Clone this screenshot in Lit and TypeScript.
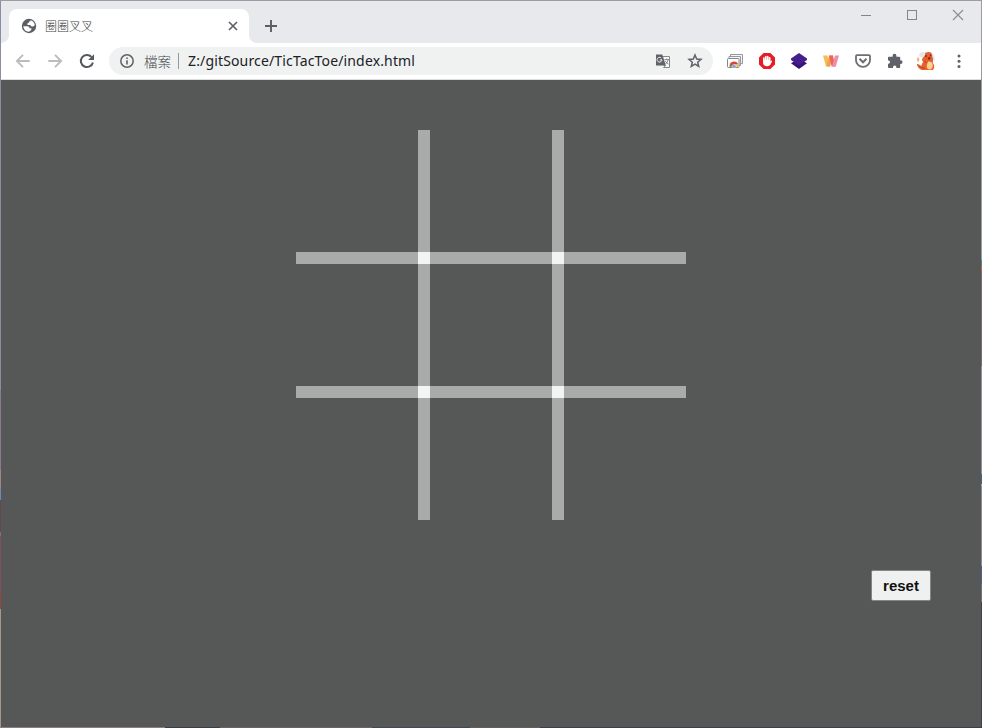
import { LitElement, html, css, svg } from "lit";
import { customElement, property } from "lit/decorators.js";

const icons: Record<string, unknown> = {
  globe: svg`<circle cx="10" cy="10" r="7.2" fill="#5b5e63"/><path d="M4.2 10.2 H8.4 Q10.6 10.4 10.6 12.2 H12.4 V13.6 Q11.6 15.6 9.6 15.8 Q5 15.2 4.2 10.2 Z M11.4 4.3 Q14.8 5.2 15.8 8.8 Q15.6 10.8 13.4 10.6 Q11.6 10.4 11.4 8.9 H8.4 V7.2 Q10.2 7.3 10 5.6 H11.4 Z" fill="#fff"/>`,
  close: svg`<path d="M6 6 L14 14 M14 6 L6 14" stroke="#5f6368" stroke-width="1.7"/>`,
  plus: svg`<path d="M10 4 V16 M4 10 H16" stroke="#5b5e63" stroke-width="1.9"/>`,
  back: svg`<path d="M16.7 10 H4.5 M10 3.8 L3.9 10 L10 16.2" stroke="#babcbe" stroke-width="1.9" fill="none"/>`,
  forward: svg`<path d="M3.3 10 H15.5 M10 3.8 L16.1 10 L10 16.2" stroke="#babcbe" stroke-width="1.9" fill="none"/>`,
  reload: svg`<path d="M15.9 11.4 A6.1 6.1 0 1 1 14.5 5.9" fill="none" stroke="#55585d" stroke-width="2"/><path d="M17 3.2 V9 H11.2 Z" fill="#55585d"/>`,
  info: svg`<circle cx="10" cy="10" r="6.2" fill="none" stroke="#5f6368" stroke-width="1.5"/><path d="M9.2 9.2 h1.6 v4.2 h-1.6z M9.2 6.4 h1.6 v1.6 h-1.6z" fill="#5f6368"/>`,
  translate: svg`<path d="M9 5.5 H16.5 V16.5 H10.5" fill="#f8f9f9" stroke="#85888b"/><path d="M3 3.5 H9.3 L12.8 14.4 H3 Z" fill="#5f6368"/><path d="M9 8.9 H6.8 M8.9 8.9 A2.4 2.4 0 1 1 8.2 7" stroke="#f1f3f4" fill="none"/><path d="M11.4 8.6 H16 M13.7 7.6 V8.6 M15.2 8.8 Q14.5 11.5 12.4 13 M12.2 10 Q13.5 12 15.5 13.2 M10.6 14.5 L12.6 14.5 L10.6 16.5" stroke="#6b6e72" stroke-width=".8" fill="none"/>`,
  star: svg`<path d="M10 4 L11.7 8 L16 8.4 L12.7 11.2 L13.7 15.5 L10 13.2 L6.3 15.5 L7.3 11.2 L4 8.4 L8.3 8 Z" fill="none" stroke="#5f6368" stroke-width="1.5"/>`,
  cast: svg`<path d="M5.5 6.5 V3.5 H17.5 V12.5 H15.5" fill="#f5f5f5" stroke="#96999b"/><path d="M4 8 V5.5 H15.5 V14.5 H14" fill="#f5f5f5" stroke="#96999b"/><rect x="2.5" y="7.5" width="11.5" height="9" rx=".8" fill="#fff" stroke="#85888b"/><path d="M4.8 16 Q4 11 9 10.6 Q12.2 10.6 13.2 13.4 H9 L7.2 16 Z" fill="#dc4437"/><path d="M4.8 16 Q4.5 14.6 5 13.4 L7.6 16 Z" fill="#3ba55b"/><path d="M10.8 13.4 H13.2 V16 H10.5 Z" fill="#f4c33d"/><path d="M6.8 16 A2.3 2.3 0 0 1 11.4 16 Z" fill="#4f83d8" stroke="#fff" stroke-width=".6"/>`,
  hand: svg`<path d="M6.6 2 H13.4 L18 6.6 V13.4 L13.4 18 H6.6 L2 13.4 V6.6 Z" fill="#e31e24"/><path d="M6 10.5 V6.7 Q6.8 5.7 7.5 6.7 V9 H7.8 V5.4 Q8.8 4.4 9.5 5.4 V8.8 H9.8 V5.2 Q10.8 4.4 11.5 5.3 V9 H11.8 V6.3 Q12.8 5.4 13.5 6.5 V10.6 L14.2 9.5 Q15.2 9.4 15.1 10.2 L13.3 13.8 Q12.5 15.2 10.2 15.2 Q6 15.2 6 11.5 Z" fill="#fff"/>`,
  layers: svg`<path d="M10 7.5 L18 12.2 L10 18 L2 12.2 Z" fill="#371477"/><path d="M10 2 L18 7.4 V9 L10 14.3 L2 9 V7.4 Z" fill="#45208c"/>`,
  w: svg`<path d="M2 4.4 H6.4 L9.2 15.6 H5 Z" fill="#f4bd58"/><path d="M8 4.4 H12 L9.2 15.6 H5.6 Z" fill="#f0a04f"/><path d="M8 4.4 H12 L14.4 15.6 H10.6 Z" fill="#ec665c"/><path d="M14 4.4 H18 L14.8 15.6 H11 Z" fill="#ee8da8"/>`,
  pocket: svg`<path d="M4 4.2 H16 Q17 4.2 17 5.2 V9.2 A7 6.7 0 0 1 3 9.2 V5.2 Q3 4.2 4 4.2 Z" fill="none" stroke="#6b6e72" stroke-width="1.8"/><path d="M6.5 7.8 L10 11.3 L13.5 7.8" fill="none" stroke="#6b6e72" stroke-width="2"/>`,
  puzzle: svg`<path d="M3.6 5.7 H7.6 V4.7 A1.9 1.9 0 0 1 11.4 4.7 V5.7 H14.3 Q15.2 5.7 15.2 6.6 V9.2 H15.7 A1.8 1.8 0 0 1 15.7 12.9 H15.2 V16 Q15.2 16.9 14.3 16.9 H11.4 V16.3 A1.7 1.7 0 0 0 8 16.3 V16.9 H4 Q3 16.9 3 16 V12.7 H3.7 A1.7 1.7 0 0 0 3.7 9.4 H3 V6.5 Z" fill="#5f6368"/>`,
  menu: svg`<circle cx="10" cy="5" r="1.5" fill="#5f6368"/><circle cx="10" cy="10.2" r="1.5" fill="#5f6368"/><circle cx="10" cy="15.4" r="1.5" fill="#5f6368"/>`,
  avatar: svg`<path d="M7 6 L8 2.4 Q10.5 .2 14.5 1.2 L17 4 Q18.6 7 17 9.6 L16.8 12 Q18.6 13.5 18.2 16.5 L17 19 H5.6 Q1 16.5 .8 12.8 L3 13.6 Q4 15 5.6 14.6 L7 10.5 L5.8 9 Z" fill="#e8602f"/><path d="M7.5 6.2 Q5 7 3.2 5.4 Q2.4 3 4.6 1.4 Q7.6 .2 9.2 1.8 Q10 4.4 7.5 6.2 Z M15.4 2.8 L18.4 4.4 L19 9 L17.2 8.4 Z" fill="#e4e7e8"/><path d="M12 10.6 Q16.4 10.4 16.8 14 Q16.8 18.4 13.4 18.6 Q10.4 17.6 10.8 14.4 Z" fill="#f8d48e"/><path d="M11.6 6.8 L14.2 5.6 L14.6 8 L12.4 9 Z" fill="#8c2f20"/><path d="M10 4 v2 M14.8 3.5 v1.8" stroke="#432524" stroke-width="1.1"/><path d="M2 5.4 L3.4 8.2 L2.4 11.4 L.8 8.8 Z" fill="#f6b06c"/><path d="M3.2 15.2 Q5.6 17.4 8.6 17.2 M9 10 L10.4 12" stroke="#b24425" fill="none"/>`,
  minimize: svg`<path d="M5 10.5 H15" stroke="#858391"/>`,
  maximize: svg`<rect x="5.5" y="5.5" width="9" height="9" fill="none" stroke="#858391"/>`,
  exit: svg`<path d="M5 5 L15 15 M15 5 L5 15" stroke="#8a8a92" stroke-width="1.1"/>`,
};

@customElement("ui-icon")
class UiIcon extends LitElement {
  @property() name = "";
  static styles = css`
    :host { display: block; width: 20px; height: 20px; flex: none; }
    svg { display: block; }
  `;
  render() {
    return html`<svg width="20" height="20" viewBox="0 0 20 20">${icons[this.name]}</svg>`;
  }
}

@customElement("game-board")
class GameBoard extends LitElement {
  static styles = css`
    :host {
      display: grid;
      grid-template: 122px 12px 122px 12px 122px / 122px 12px 122px 12px 122px;
    }
    .bar { background: #a9abaa; }
    .cross { background: #f4f4f4; }
  `;
  render() {
    return Array.from({ length: 25 }, (_, i) => {
      const odd = (Math.floor(i / 5) % 2) + ((i % 5) % 2);
      return html`<div class=${["cell", "bar", "cross"][odd]}></div>`;
    });
  }
}

@customElement("app-root")
class AppRoot extends LitElement {
  static styles = css`
    :host {
      display: flex;
      width: 982px;
      height: 728px;
      box-sizing: border-box;
      padding: 1px;
      font-family: "Noto Sans", "Noto Sans CJK TC", sans-serif;
      background:
        linear-gradient(#9c9aa3, #9c9aa3) top / 100% 1px no-repeat,
        linear-gradient(90deg, #8b7f86 0 165px, #3c3d47 165px 220px, #6b6265 220px 372px, #444653 372px 470px, #625d60 470px 540px, #3d3e49 540px) bottom / 100% 1px no-repeat,
        linear-gradient(#8b8ca8 0 390px, #8d7a90 390px 470px, #a08884 470px 489px, #6b89bb 489px 500px, #64474f 500px 532px, #777 532px 536px, #81505f 536px 590px, #914641 590px 609px, #a6978d 609px) left / 1px 100% no-repeat,
        linear-gradient(#9b9aa5 0 260px, #5e7f91 260px 266px, #c56b32 266px 271px, #81686b 271px 366px, #9691a0 366px 474px, #45638b 474px 484px, #aaa 484px 486px, #918b94 486px 566px, #555e83 566px 584px, #77727a 584px 602px, #41424d 602px) right / 1px 100% no-repeat;
    }
    .window { flex: 1; display: flex; flex-direction: column; min-width: 0; }
    .strip { height: 42px; display: flex; background: #e8e9ed; }
    .foot { width: 8px; height: 8px; align-self: flex-end; }
    .foot.left { background: radial-gradient(circle at 0 0, transparent 7.6px, #fff 8.2px); }
    .foot.right { background: radial-gradient(circle at 100% 0, transparent 7.6px, #fff 8.2px); }
    .tab {
      width: 240px; height: 34px; margin-top: 8px; box-sizing: border-box;
      padding: 0 6px 0 10px; display: flex; align-items: center;
      background: #fff; border-radius: 8px 8px 0 0;
    }
    .title {
      flex: 1; margin-left: 6px; font: 300 12px/16px "Noto Sans CJK TC", sans-serif; color: #3c4043;
    }
    .add { margin: 15px 0 0 4px; }
    .controls { margin: 4px 13px 0 auto; display: flex; gap: 26px; }
    .toolbar {
      height: 37px; box-sizing: border-box; display: flex; align-items: center;
      padding: 0 12px; background: #fff; border-bottom: 1px solid #dcdddf;
    }
    .nav { display: flex; gap: 12px; }
    .address {
      width: 604px; height: 28px; box-sizing: border-box; margin-left: 12px; padding: 0 8px;
      display: flex; align-items: center; border-radius: 14px; background: #f0f2f2;
    }
    .scheme { margin-left: 7px; width: 27px; font: 300 13.5px/20px "Noto Sans CJK TC", sans-serif; color: #3f4247; }
    .rule { width: 1px; height: 16px; margin: 0 9px 0 7px; background: #96989b; }
    .url { flex: 1; font-size: 14px; line-height: 20px; letter-spacing: 0.15px; color: #202124; }
    .actions { display: flex; gap: 12px; }
    .extensions { display: flex; gap: 12px; margin-left: 12px; }
    .avatar { margin-left: 11px; }
    .menu { margin-left: 13px; }
    .page {
      flex: 1; display: flex; flex-direction: column; align-items: center;
      background: #565857; padding-top: 50px;
    }
    .reset {
      align-self: flex-end; margin: 50px 50px 0 0; width: 60px; height: 31px; box-sizing: border-box;
      border: 1px solid #858786; border-radius: 2px; padding: 0; background: #eff0f0; color: #111;
      font: bold 15px "Liberation Sans", Arial, sans-serif;
    }
  `;
  render() {
    const icon = (name: string) => html`<ui-icon name=${name}></ui-icon>`;
    return html`
      <div class="window">
        <div class="strip">
          <div class="foot left"></div>
          <div class="tab">${icon("globe")}<span class="title">圈圈叉叉</span>${icon("close")}</div>
          <div class="foot right"></div>
          <ui-icon class="add" name="plus"></ui-icon>
          <div class="controls">${["minimize", "maximize", "exit"].map(icon)}</div>
        </div>
        <div class="toolbar">
          <div class="nav">${["back", "forward", "reload"].map(icon)}</div>
          <div class="address">
            ${icon("info")}<span class="scheme">檔案</span><span class="rule"></span>
            <span class="url">Z:/gitSource/TicTacToe/index.html</span>
            <div class="actions">${["translate", "star"].map(icon)}</div>
          </div>
          <div class="extensions">${["cast", "hand", "layers", "w", "pocket", "puzzle"].map(icon)}</div>
          <ui-icon class="avatar" name="avatar"></ui-icon>
          <ui-icon class="menu" name="menu"></ui-icon>
        </div>
        <main class="page">
          <game-board></game-board>
          <button class="reset">reset</button>
        </main>
      </div>
    `;
  }
}
